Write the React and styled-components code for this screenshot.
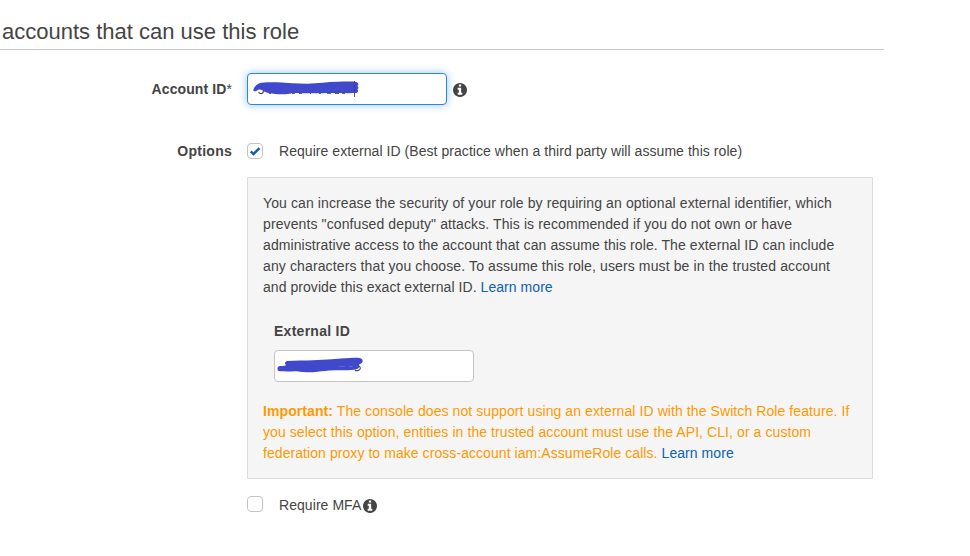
import React from "react";
import styled, { createGlobalStyle, css } from "styled-components";

const GlobalStyle = createGlobalStyle`
  * { box-sizing: border-box; }
  body {
    margin: 0;
    background: #fff;
    color: #444;
    font: 14px/21px "Liberation Sans", Arial, sans-serif;
    overflow: hidden;
  }
`;

const Page = styled.main`
  width: 970px;
  height: 556px;
`;

const Heading = styled.h1`
  margin: 0;
  width: 884px;
  height: 50px;
  padding: 17px 0 0 2px;
  border-bottom: 1px solid #c8c8c8;
  font-size: 22px;
  line-height: 30px;
  font-weight: 400;
  white-space: nowrap;
`;

const FormRow = styled.div`
  display: grid;
  grid-template-columns: 232px 626px;
  column-gap: 15px;
  align-items: center;
  height: ${(p) => p.$height}px;
  margin-top: ${(p) => p.$gap}px;
`;

const RowLabel = styled.label`
  font-weight: 700;
  text-align: right;
  letter-spacing: ${(p) => p.$track}px;
`;

const Star = styled.span`
  font-weight: 400;
`;

const Control = styled.div`
  display: flex;
  align-items: center;
  white-space: nowrap;
`;

const OptionText = styled.span`
  letter-spacing: ${(p) => p.$track}px;
`;

const Field = styled.div`
  width: 200px;
  height: 32px;
  border: 1px solid #c4c4c4;
  border-radius: 4px;
  background: #fff;
  ${(p) =>
    p.$focused &&
    css`
      border-color: #2d87d8;
      box-shadow: 0 0 8px rgba(82, 160, 236, 0.6);
    `}
`;

const Scribble = styled.svg`
  display: block;
`;

const InfoSvg = styled.svg`
  width: 14px;
  height: 14px;
  margin-left: ${(p) => p.$gap}px;
  margin-top: 2px;
  fill: #444;
`;

const Checkbox = styled.span`
  display: flex;
  width: 16px;
  height: 16px;
  margin: 0 16px 2px 0;
  border: 1px solid #c4c4c4;
  border-radius: 4px;
  background: #fff;
`;

const Panel = styled.section`
  width: 626px;
  height: 302px;
  margin: 15px 0 0 247px;
  padding: 15px;
  border: 1px solid #ddd;
  background: #f5f5f5;
`;

const Paragraph = styled.p`
  margin: 0;
  color: ${(p) => (p.$warning ? "#ff9900" : "#444")};
`;

const Line = styled.span`
  display: block;
  white-space: nowrap;
  letter-spacing: ${(p) => p.$track}px;
`;

const Link = styled.a`
  color: #0f61b3;
`;

const ExternalId = styled.div`
  display: flex;
  flex-direction: column;
  gap: 8px;
  margin: 23px 0 19px 11px;
`;

const FieldLabel = styled.label`
  font-weight: 700;
  letter-spacing: 0.27px;
`;

function InfoIcon({ gap }) {
  return (
    <InfoSvg $gap={gap} viewBox="0 128 1536 1536">
      <path d="M1024 1376v-160q0-14-9-23t-23-9h-96v-512q0-14-9-23t-23-9h-320q-14 0-23 9t-9 23v160q0 14 9 23t23 9h96v320h-96q-14 0-23 9t-9 23v160q0 14 9 23t23 9h448q14 0 23-9t9-23zm-128-896v-160q0-14-9-23t-23-9h-192q-14 0-23 9t-9 23v160q0 14 9 23t23 9h192q14 0 23-9t9-23zm640 416q0 209-103 385.500t-279.500 279.500-385.500 103-385.500-103-279.500-279.500-103-385.500 103-385.500 279.500-279.500 385.500-103 385.500 103 279.500 279.500 103 385.500z" />
    </InfoSvg>
  );
}

function AccountScribble() {
  return (
    <Scribble width="198" height="30" viewBox="248 74 198 30" fill="none">
      <path d="M258.500 92q1 1.700 2.800 1.600 2.200-.3 2-2.600" stroke="#444" strokeWidth="1.100" />
      <path d="M269 93.500h2m6 0h2m13 0h3m4 0h3m8 0h1m8 0h2m6 0h4m4 0h4m3 0h3" stroke="#333" strokeOpacity=".75" />
      <path d="M253.300 90.500c0-2 2.500-5.800 6-7.200 5-1.500 12-1.200 18-1 10 .6 20 1.400 30 1.400 11-.3 20-1.800 30-1.900 7-.2 15-.4 19 .1 2.500.8 2.600 3 1 4.200 1.600 1 1.300 2.600.2 3.500 1.600 2-.2 3.400-3 3.500-8 .2-16-.2-25-.1-12 .3-24 .3-36-.1-5 1.300-12 1.700-18 1-5-.5-10-1-13-3.500-2.500-1.500-4.500-.6-6 .5-1.700.9-3 .3-3.200-.4z" fill="#4048cc" />
      <path d="M354.500 81v16" stroke="#333" strokeOpacity=".8" />
      <path d="M350 84h7m-7 4h7m-7 4h7" stroke="#4048cc" strokeWidth="2" />
    </Scribble>
  );
}

function ExternalScribble() {
  return (
    <Scribble width="198" height="30" viewBox="275 351 198 30" fill="none">
      <path d="M285.500 364.500v-2h2v-1" stroke="#555" />
      <path d="M355 370q1.500 1.500 4 0t.2-4" stroke="#444" strokeWidth="1.100" />
      <path d="M277.500 368.500c0-2 1.500-2.500 4-2.500 2 0 4-.2 4.500-1 .2-1.500-1-3.300 1-3.900 8-.4 17-.5 26-.8 13-.5 25-1.700 37-2.300 4-.2 8-.2 10.500.2 2.700.8 3 4 .5 5.300-1.300.7-2 1-2 1.500 1.500 2.500-1.500 4.500-5 4.800-8 .8-17 .4-25 .7-5 .4-10 1.300-16 1.700-6 .3-11-.2-16-1-7 .3-12 .3-17 .1-2-.1-2.500-1.300-2.500-2.800z" fill="#4048cc" />
      <path d="M339 366.500h6m4 0h4" stroke="#7078dc" strokeWidth=".6" />
    </Scribble>
  );
}

function CheckMark() {
  return (
    <svg width="14" height="14" viewBox="0 0 14 14" fill="none">
      <path d="M2.700 7.300 5.500 10 11.500 4.100" stroke="#0f5fb8" strokeWidth="2.400" />
    </svg>
  );
}

export default function App() {
  return (
    <Page>
      <GlobalStyle />
      <Heading>accounts that can use this role</Heading>
      <FormRow $height={32} $gap={23}>
        <RowLabel $track={0.1}>Account ID<Star>*</Star></RowLabel>
        <Control>
          <Field $focused><AccountScribble /></Field>
          <InfoIcon gap={6} />
        </Control>
      </FormRow>
      <FormRow $height={21} $gap={36}>
        <RowLabel $track={0.25}>Options</RowLabel>
        <Control>
          <Checkbox role="checkbox" aria-checked="true"><CheckMark /></Checkbox>
          <OptionText $track={0.053}>Require external ID (Best practice when a third party will assume this role)</OptionText>
        </Control>
      </FormRow>
      <Panel>
        <Paragraph>
          <Line $track={0.105}>You can increase the security of your role by requiring an optional external identifier, which</Line>
          <Line $track={0.11}>prevents "confused deputy" attacks. This is recommended if you do not own or have</Line>
          <Line $track={0.09}>administrative access to the account that can assume this role. The external ID can include</Line>
          <Line $track={0.123}>any characters that you choose. To assume this role, users must be in the trusted account</Line>
          <Line $track={0.055}>and provide this exact external ID. <Link>Learn more</Link></Line>
        </Paragraph>
        <ExternalId>
          <FieldLabel>External ID</FieldLabel>
          <Field><ExternalScribble /></Field>
        </ExternalId>
        <Paragraph $warning>
          <Line $track={0.083}><b>Important:</b> The console does not support using an external ID with the Switch Role feature. If</Line>
          <Line $track={0.08}>you select this option, entities in the trusted account must use the API, CLI, or a custom</Line>
          <Line $track={0.066}>federation proxy to make cross-account iam:AssumeRole calls. <Link>Learn more</Link></Line>
        </Paragraph>
      </Panel>
      <FormRow $height={22} $gap={15}>
        <span />
        <Control>
          <Checkbox role="checkbox" aria-checked="false" />
          <OptionText $track={0.06}>Require MFA</OptionText>
          <InfoIcon gap={2} />
        </Control>
      </FormRow>
    </Page>
  );
}
